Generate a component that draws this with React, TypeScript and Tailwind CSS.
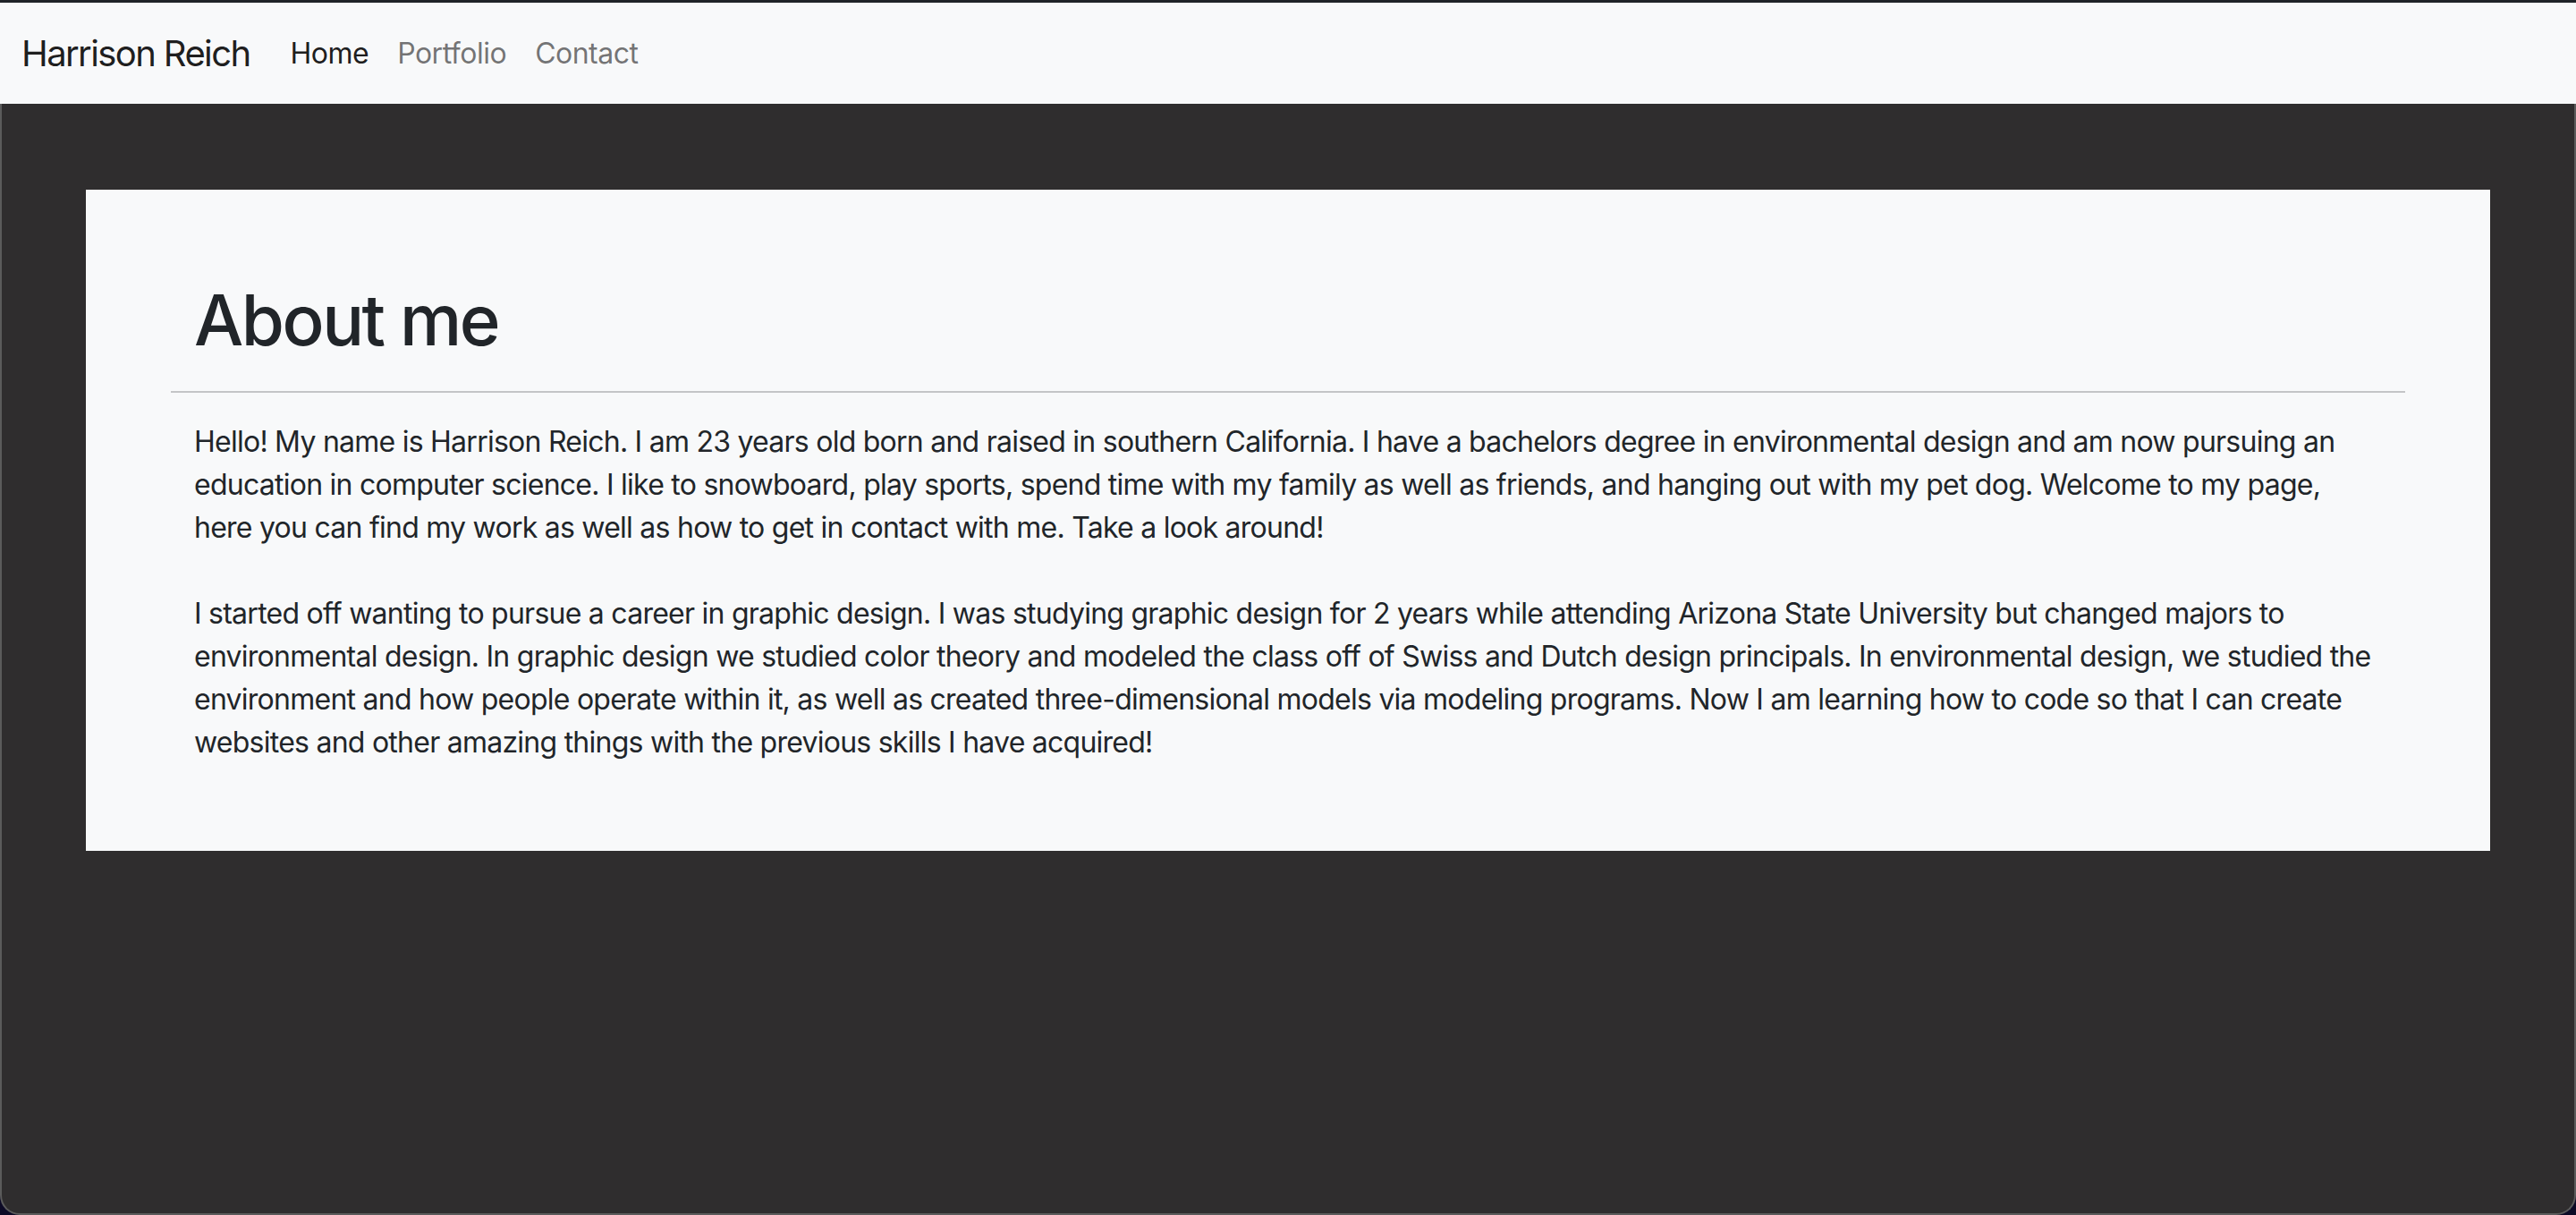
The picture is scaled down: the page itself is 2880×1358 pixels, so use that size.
const links = [
  { name: "Home", active: true },
  { name: "Portfolio", active: false },
  { name: "Contact", active: false },
];

const intro = [
  "Hello! My name is Harrison Reich. I am 23 years old born and raised in southern California. I have a bachelors degree in environmental design and am now pursuing an",
  "education in computer science. I like to snowboard, play sports, spend time with my family as well as friends, and hanging out with my pet dog. Welcome to my page,",
  "here you can find my work as well as how to get in contact with me. Take a look around!",
];

const background = [
  "I started off wanting to pursue a career in graphic design. I was studying graphic design for 2 years while attending Arizona State University but changed majors to",
  "environmental design. In graphic design we studied color theory and modeled the class off of Swiss and Dutch design principals. In environmental design, we studied the",
  "environment and how people operate within it, as well as created three-dimensional models via modeling programs. Now I am learning how to code so that I can create",
  "websites and other amazing things with the previous skills I have acquired!",
];

const App = () => {
  return (
    <div className="h-[1358px] overflow-hidden bg-[#0d0a26] font-['Inter',sans-serif] text-[#212529]">
      {/* window top edge */}
      <div className="h-[3px] bg-[#1f2328]" />

      {/* Navbar */}
      <nav className="flex h-[113px] items-center bg-[#f8f9fa] pl-[24px]">
        <span className="mr-[29px] text-[40px] leading-[60px] tracking-[-1.6px] text-black/90">
          Harrison Reich
        </span>
        <ul className="flex">
          {links.map((link) => (
            <li key={link.name}>
              <a
                href="#"
                className={
                  link.active
                    ? "block px-[16px] text-[32px] leading-[48px] tracking-[-0.5px] text-black/90"
                    : "block px-[16px] text-[32px] leading-[48px] tracking-[-0.5px] text-black/55"
                }
              >
                {link.name}
              </a>
            </li>
          ))}
        </ul>
      </nav>

      {/* Main */}
      <main className="h-[1242px] rounded-b-[22px] border-x-2 border-b-2 border-[#5b5b5b] bg-[#2f2d2e] px-[94px] pt-[96px]">
        <section className="bg-[#f8f9fa] px-[95px] pt-[98px] pb-[97px]">
          <h1 className="px-[26px] text-[78px] font-medium leading-[96px] tracking-[-2.5px]">
            About me
          </h1>
          <hr className="mt-[31px] mb-[31px] border-t-2 border-[#c4c5c7]" />
          <div className="px-[26px] text-[32px] leading-[48px] tracking-[-0.75px]">
            <p>
              {intro.map((line) => (
                <span key={line} className="block whitespace-nowrap">
                  {line}
                </span>
              ))}
            </p>
            <p className="mt-[48px]">
              {background.map((line) => (
                <span key={line} className="block whitespace-nowrap">
                  {line}
                </span>
              ))}
            </p>
          </div>
        </section>
      </main>
    </div>
  );
};

export default App;
